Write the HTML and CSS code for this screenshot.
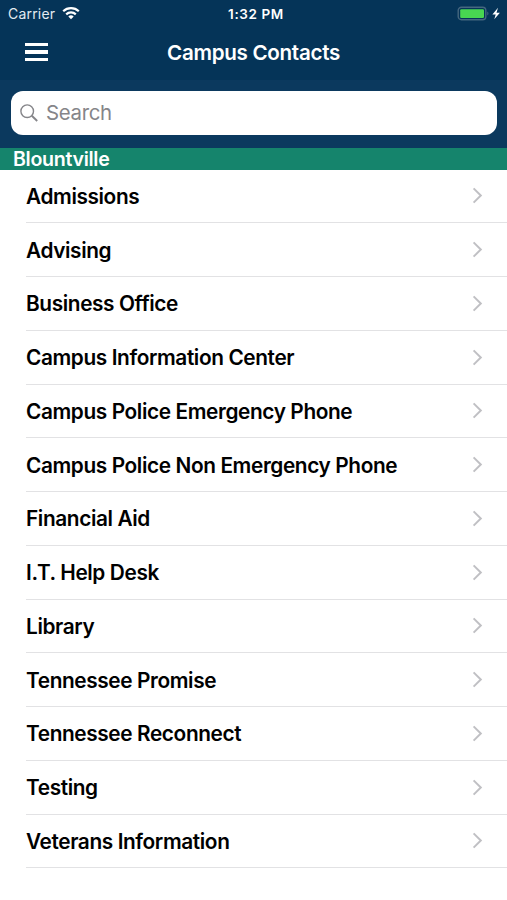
FILE: index.html
```
<!DOCTYPE html>
<html lang="en">
<head>
    <meta charset="UTF-8">
    <title>Campus Contacts</title>
    <link rel="stylesheet" href="styles.css">
</head>
<body>
    <header class="header">
        <div class="status-bar">
            <div class="carrier">
                <span>Carrier</span>
                <svg width="18" height="14" viewBox="0 0 18 14" fill="none" stroke="#fff" stroke-width="2.2">
                    <path d="M1.2 5.2a11.2 11.2 0 0 1 15.6 0"/>
                    <path d="M4.2 8.4a6.9 6.9 0 0 1 9.6 0"/>
                    <path d="M9 13.2L6.3 10.5a3.9 3.9 0 0 1 5.4 0z" fill="#fff" stroke="none"/>
                </svg>
            </div>
            <span class="time">1:32 PM</span>
            <div class="battery">
                <svg width="45" height="16" viewBox="0 0 45 16">
                    <rect x="1.2" y="1.2" width="27.6" height="12.6" rx="3.2" fill="none" stroke="#45667f" stroke-width="1.4"/>
                    <rect x="3.2" y="3.2" width="23.8" height="8.8" rx="1.2" fill="#48d751"/>
                    <path d="M30.3 5.6v4a2.3 2.3 0 0 0 0-4z" fill="#45667f"/>
                    <path d="M41 1.8l-5.6 6.6h3.3l-1.4 4.8 5.6-6.5h-3.4z" fill="#fff"/>
                </svg>
            </div>
        </div>
        <div class="nav-bar">
            <button class="menu" aria-label="Menu">
                <span></span>
                <span></span>
                <span></span>
            </button>
            <h1>Campus Contacts</h1>
        </div>
    </header>

    <div class="search-bar">
        <label class="search-box">
            <svg width="18" height="18" viewBox="0 0 18 18" fill="none" stroke="#858589" stroke-width="1.4">
                <circle cx="7.2" cy="7.2" r="6.3"/>
                <path d="M11.8 11.8l5.4 5.2" stroke-width="1.9"/>
            </svg>
            <input type="text" placeholder="Search">
        </label>
    </div>

    <h2 class="section">Blountville</h2>
    <ul class="contacts">
        <li>Admissions</li>
        <li>Advising</li>
        <li>Business Office</li>
        <li>Campus Information Center</li>
        <li>Campus Police Emergency Phone</li>
        <li>Campus Police Non Emergency Phone</li>
        <li>Financial Aid</li>
        <li>I.T. Help Desk</li>
        <li>Library</li>
        <li>Tennessee Promise</li>
        <li>Tennessee Reconnect</li>
        <li>Testing</li>
        <li>Veterans Information</li>
    </ul>

    <script>
        // Add the disclosure arrow to every row
        document.querySelectorAll('.contacts li').forEach((row) => {
            row.insertAdjacentHTML('beforeend',
                '<svg width="11" height="17" viewBox="0 0 11 17" fill="none" stroke="#c0c0c4" stroke-width="2"><path d="M1.6 1.4l7.2 7.1-7.2 7.1"/></svg>');
        });
    </script>
</body>
</html>
```
FILE: styles.css
```
* {
    box-sizing: border-box;
}

body {
    margin: 0;
    height: 900px;
    overflow: hidden;
    background-color: #fff;
    font-family: Inter, "Liberation Sans", sans-serif;
}

.header {
    height: 80px;
    background-color: #053458;
    color: #fff;
}

.status-bar {
    display: grid;
    grid-template-columns: 1fr auto 1fr;
    align-items: center;
    height: 27px;
    padding: 0 5px 0 8px;
    font-size: 14px;
}

.carrier {
    display: flex;
    align-items: center;
    gap: 7px;
    color: #e3ebf1;
    letter-spacing: 0.2px;
}

.carrier svg {
    margin-top: -2px;
}

.time {
    padding-left: 2px;
    font-weight: 600;
    font-size: 13.5px;
    letter-spacing: 0.6px;
}

.battery {
    display: flex;
    justify-content: flex-end;
}

.nav-bar {
    display: grid;
    grid-template-columns: 72px 1fr 72px;
    align-items: center;
    height: 50px;
}

.menu {
    display: flex;
    flex-direction: column;
    gap: 4px;
    width: 23px;
    margin-left: 25px;
    padding: 0;
    border: none;
    background: none;
}

.menu span {
    height: 3.5px;
    background-color: #fff;
}

.nav-bar h1 {
    margin: 0;
    padding-top: 1px;
    font-size: 20.6px;
    font-weight: 600;
    letter-spacing: -0.3px;
    text-align: center;
}

.search-bar {
    height: 68px;
    padding: 11px 10px 0 11px;
    background-color: #0b395e;
}

.search-box {
    display: flex;
    align-items: center;
    gap: 8px;
    height: 44px;
    padding: 0 9px 1px;
    border-radius: 12px;
    background-color: #fff;
}

.search-box input {
    flex: 1;
    padding: 0;
    border: none;
    outline: none;
    font-family: inherit;
    font-size: 20.4px;
    letter-spacing: -0.3px;
}

.search-box input::placeholder {
    color: #858589;
}

.section {
    height: 21.5px;
    margin: 0;
    padding-left: 13px;
    background-color: #15846c;
    color: #fff;
    font-size: 19.6px;
    font-weight: 600;
    letter-spacing: -0.3px;
    line-height: 22px;
}

.contacts {
    margin: 0;
    padding: 0 0 0 26px;
    list-style: none;
}

.contacts li {
    display: flex;
    justify-content: space-between;
    align-items: center;
    height: 53.75px;
    padding: 1px 24px 0 0;
    border-bottom: 1px solid #e2e2e4;
    font-size: 20.8px;
    font-weight: 600;
    letter-spacing: -0.38px;
}

.contacts svg {
    margin-top: -1px;
}
```
